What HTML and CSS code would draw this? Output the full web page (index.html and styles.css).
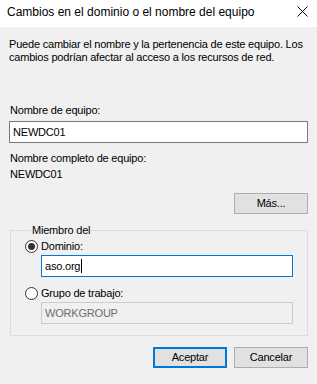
FILE: index.html
```html
<!DOCTYPE html>
<html lang="es">
<head>
<meta charset="utf-8">
<title>Cambios en el dominio o el nombre del equipo</title>
<link rel="stylesheet" href="styles.css">
</head>
<body>
<div class="dialog">
  <div class="titlebar">
    <span class="title">Cambios en el dominio o el nombre del equipo</span>
    <svg class="close" width="11" height="11" viewBox="0 0 11 11"><path d="M0.5 0.5 L10.5 10.5 M10.5 0.5 L0.5 10.5" stroke="#000" stroke-width="1" fill="none"/></svg>
  </div>
  <div class="content">
    <p class="desc">Puede cambiar el nombre y la pertenencia de este equipo. Los cambios podrían afectar al acceso a los recursos de red.</p>
    <div class="label name-label">Nombre de equipo:</div>
    <div class="textbox">NEWDC01</div>
    <div class="label full-label">Nombre completo de equipo:</div>
    <div class="label full-value">NEWDC01</div>
    <div class="more-row"><div class="button">Más...</div></div>
    <fieldset class="group">
      <legend>Miembro del</legend>
      <div class="radio-row"><span class="radio checked"></span><span class="radio-label">Dominio:</span></div>
      <div class="textbox sub focused">aso.org<span class="caret"></span></div>
      <div class="radio-row second"><span class="radio"></span><span class="radio-label">Grupo de trabajo:</span></div>
      <div class="textbox sub disabled">WORKGROUP</div>
    </fieldset>
    <div class="actions">
      <div class="button default">Aceptar</div>
      <div class="button">Cancelar</div>
    </div>
  </div>
</div>
</body>
</html>
```
FILE: styles.css
```css
html, body {
  margin: 0;
  padding: 0;
  background: #f0f0f0;
}
.dialog {
  width: 317px;
  height: 384px;
  background: #f0f0f0;
  font-family: "Liberation Sans", Arial, sans-serif;
  font-size: 11px;
  line-height: 13px;
  color: #000;
  overflow: hidden;
}
.titlebar {
  height: 27px;
  background: #fff;
  display: flex;
  align-items: center;
  justify-content: space-between;
  padding: 0 9px 0 7px;
}
.title {
  font-family: "Liberation Sans", Arial, sans-serif;
  font-size: 12px;
  line-height: 16px;
  margin-top: -3px;
}
.close {
  display: block;
  margin-top: -4px;
}
.content {
  padding: 0 9px;
  letter-spacing: -0.2px;
}
.desc {
  margin: 11px 0 0 0;
  padding-right: 4px;
}
.label {
  padding-left: 1px;
}
.name-label {
  margin-top: 40px;
}
.textbox {
  box-sizing: border-box;
  height: 22px;
  margin-top: 4px;
  border: 1px solid #7a7a7a;
  background: #fff;
  padding: 0 3px;
  display: flex;
  align-items: center;
}
.full-label {
  margin-top: 9px;
}
.full-value {
  margin-top: 3px;
}
.more-row {
  display: flex;
  justify-content: flex-end;
  margin-top: 12px;
}
.button {
  box-sizing: border-box;
  width: 74px;
  height: 21px;
  border: 1px solid #adadad;
  background: #e1e1e1;
  display: flex;
  align-items: center;
  justify-content: center;
}
.button.default {
  border: 2px solid #0078d7;
}
.group {
  margin: 10px 0 0 1px;
  padding: 3px 14px 11px 14px;
  border: 1px solid #dcdcdc;
  min-width: 0;
}
.group legend {
  padding: 0 1px;
  margin-left: 6px;
}
.radio-row {
  display: flex;
  align-items: center;
  gap: 3px;
}
.radio-row.second {
  margin-top: 10px;
}
.radio {
  box-sizing: border-box;
  width: 13px;
  height: 13px;
  border: 1px solid #333;
  border-radius: 50%;
  background: #fff;
  display: flex;
  align-items: center;
  justify-content: center;
}
.radio.checked::after {
  content: "";
  width: 7px;
  height: 7px;
  border-radius: 50%;
  background: #333;
}
.textbox.sub {
  margin-left: 16px;
  margin-top: 2px;
}
.textbox.focused {
  border-color: #0078d7;
}
.caret {
  display: inline-block;
  width: 1px;
  height: 14px;
  background: #000;
  margin-left: 1px;
}
.textbox.disabled {
  border-color: #cccccc;
  background: #f0f0f0;
  color: #6d6d6d;
}
.actions {
  display: flex;
  justify-content: flex-end;
  gap: 7px;
  margin-top: 11px;
}
```
